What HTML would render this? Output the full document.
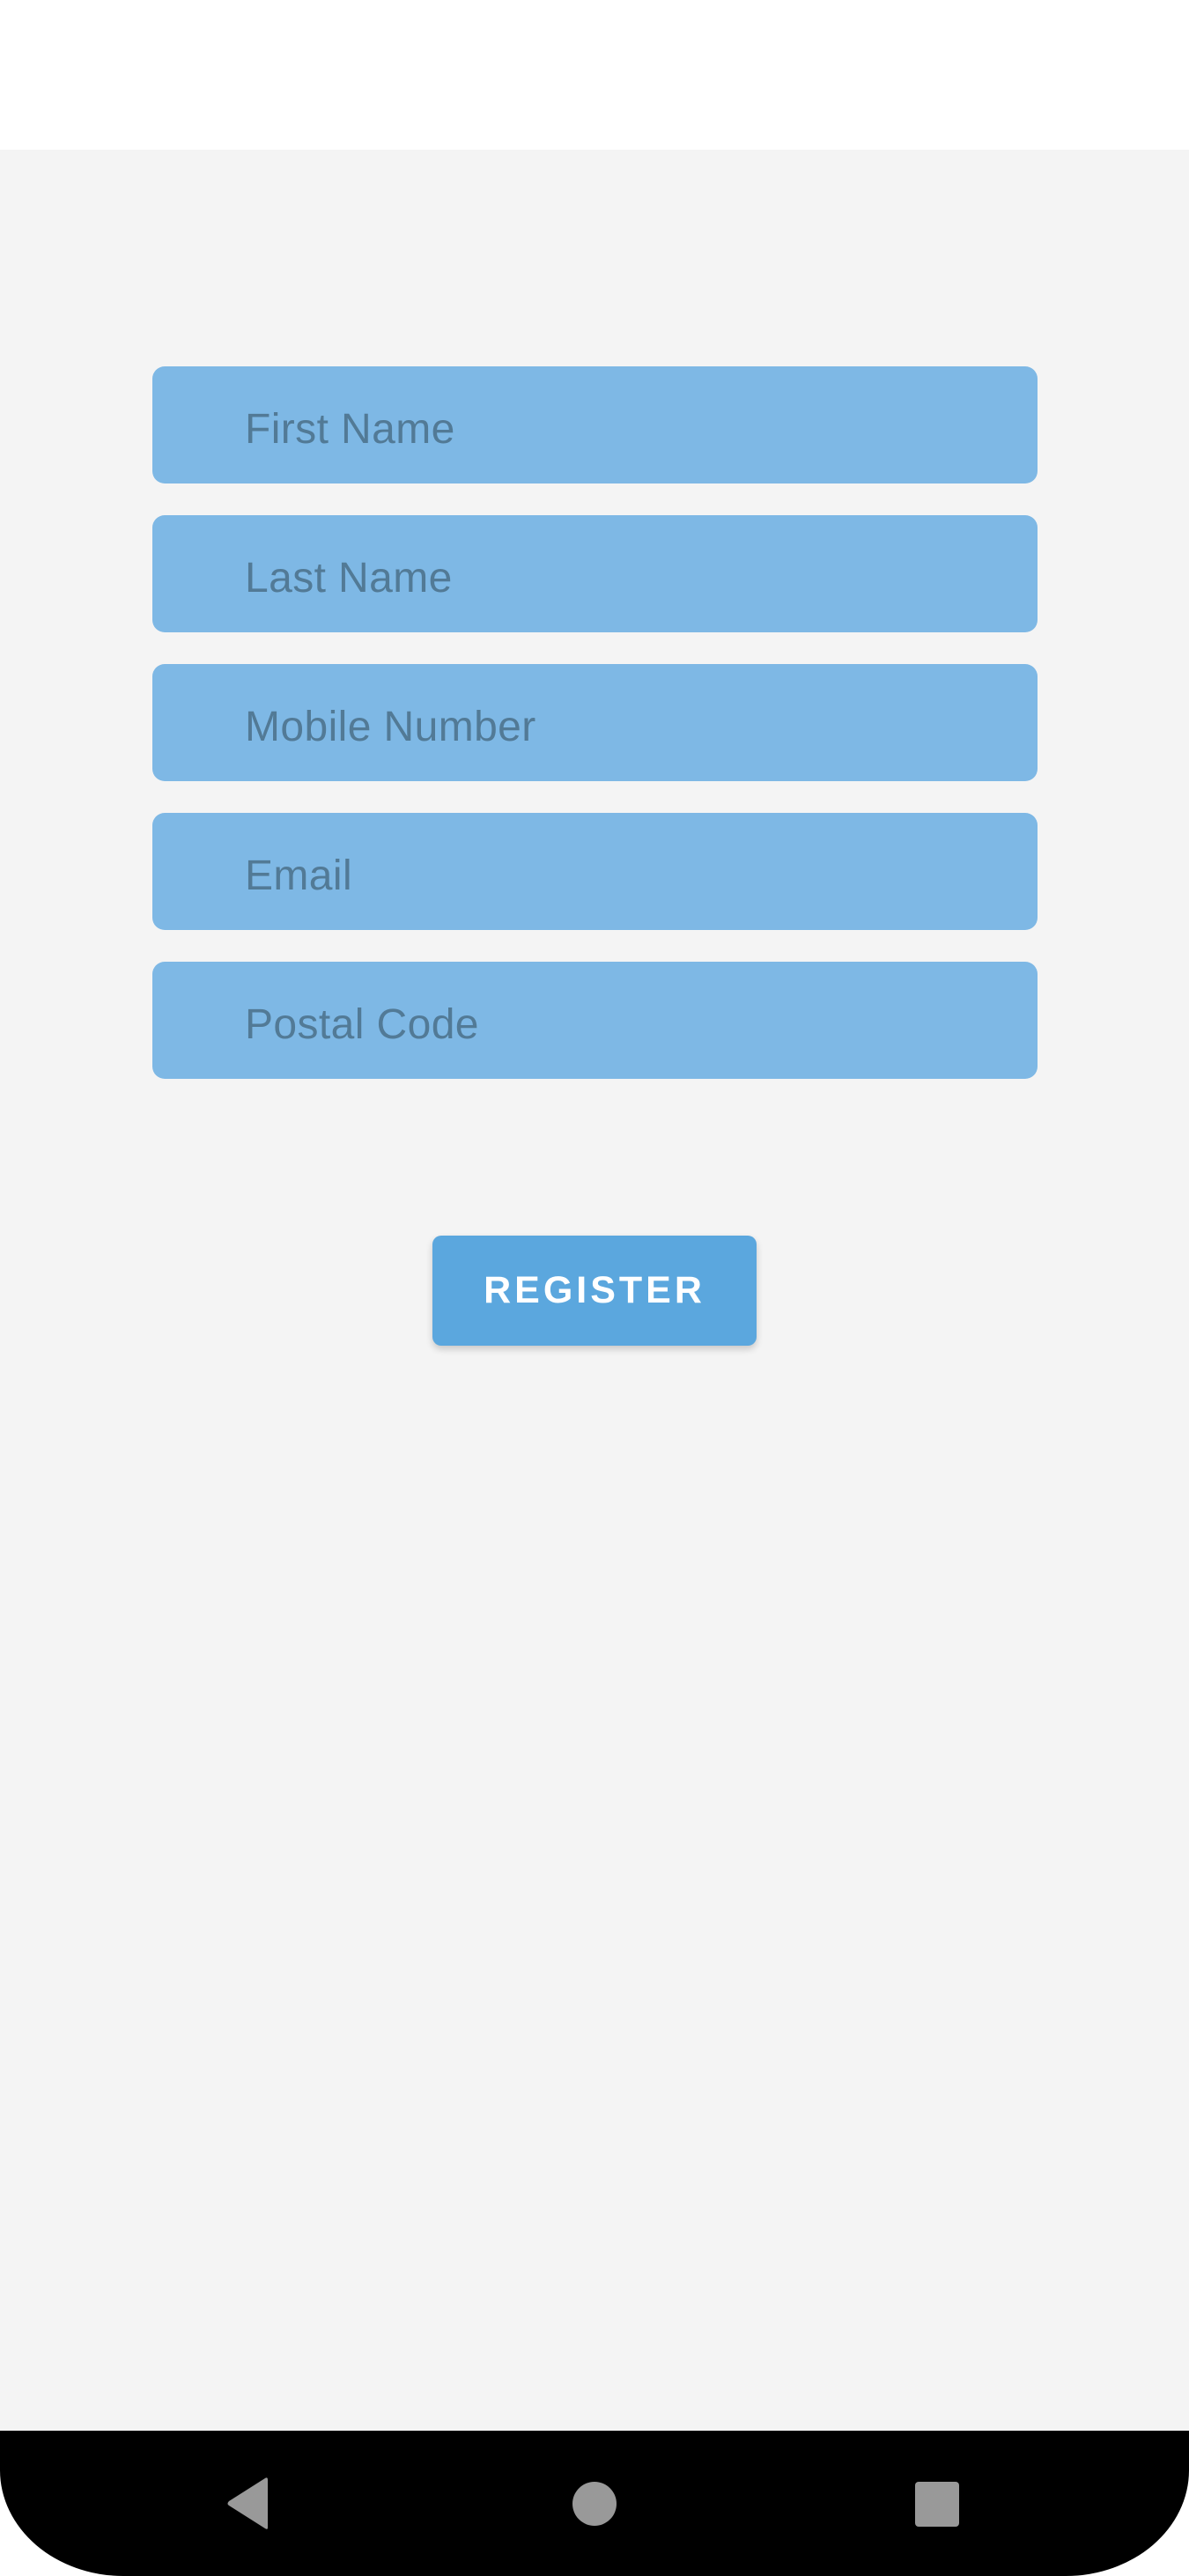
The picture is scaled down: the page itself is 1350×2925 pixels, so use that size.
<!DOCTYPE html>
<html><head><meta charset="utf-8"><style>
html,body{margin:0;padding:0;}
body{width:1350px;height:2925px;background:#fff;position:relative;overflow:hidden;font-family:"Liberation Sans",sans-serif;}
.main{position:absolute;left:0;top:170px;width:1350px;height:2590px;background:#f4f4f4;}
.f{position:absolute;left:173px;width:1005px;height:133px;background:#7eb8e5;border-radius:14px;}
.f span{position:absolute;left:105px;top:48px;font-size:48px;line-height:48px;color:#527a96;letter-spacing:0.4px;}
.btn{position:absolute;left:491px;top:1403px;width:368px;height:125px;background:#5ba7de;border-radius:10px;box-shadow:0 4px 8px rgba(0,0,0,0.18);color:#fff;font-size:43px;font-weight:bold;letter-spacing:4px;text-align:center;line-height:125px;}
.nav{position:absolute;left:0;top:2760px;width:1350px;height:165px;background:#000;border-radius:0 0 140px 140px/0 0 120px 120px;}
</style></head><body>
<div class="main"></div>
<div class="f" style="top:416px"><span>First Name</span></div>
<div class="f" style="top:585px"><span>Last Name</span></div>
<div class="f" style="top:754px"><span>Mobile Number</span></div>
<div class="f" style="top:923px"><span>Email</span></div>
<div class="f" style="top:1092px"><span>Postal Code</span></div>
<div class="btn">REGISTER</div>
<div class="nav">
<svg width="1350" height="165" style="position:absolute;left:0;top:0">
<path d="M304 56 L304 110 Q304 113 301 111 L260 85 Q257 83 260 80 L301 54 Q304 52 304 56Z" fill="#999"/>
<circle cx="675" cy="83" r="25" fill="#999"/>
<rect x="1039" y="58" width="50" height="51" rx="4" fill="#999"/>
</svg>
</div>
</body></html>
